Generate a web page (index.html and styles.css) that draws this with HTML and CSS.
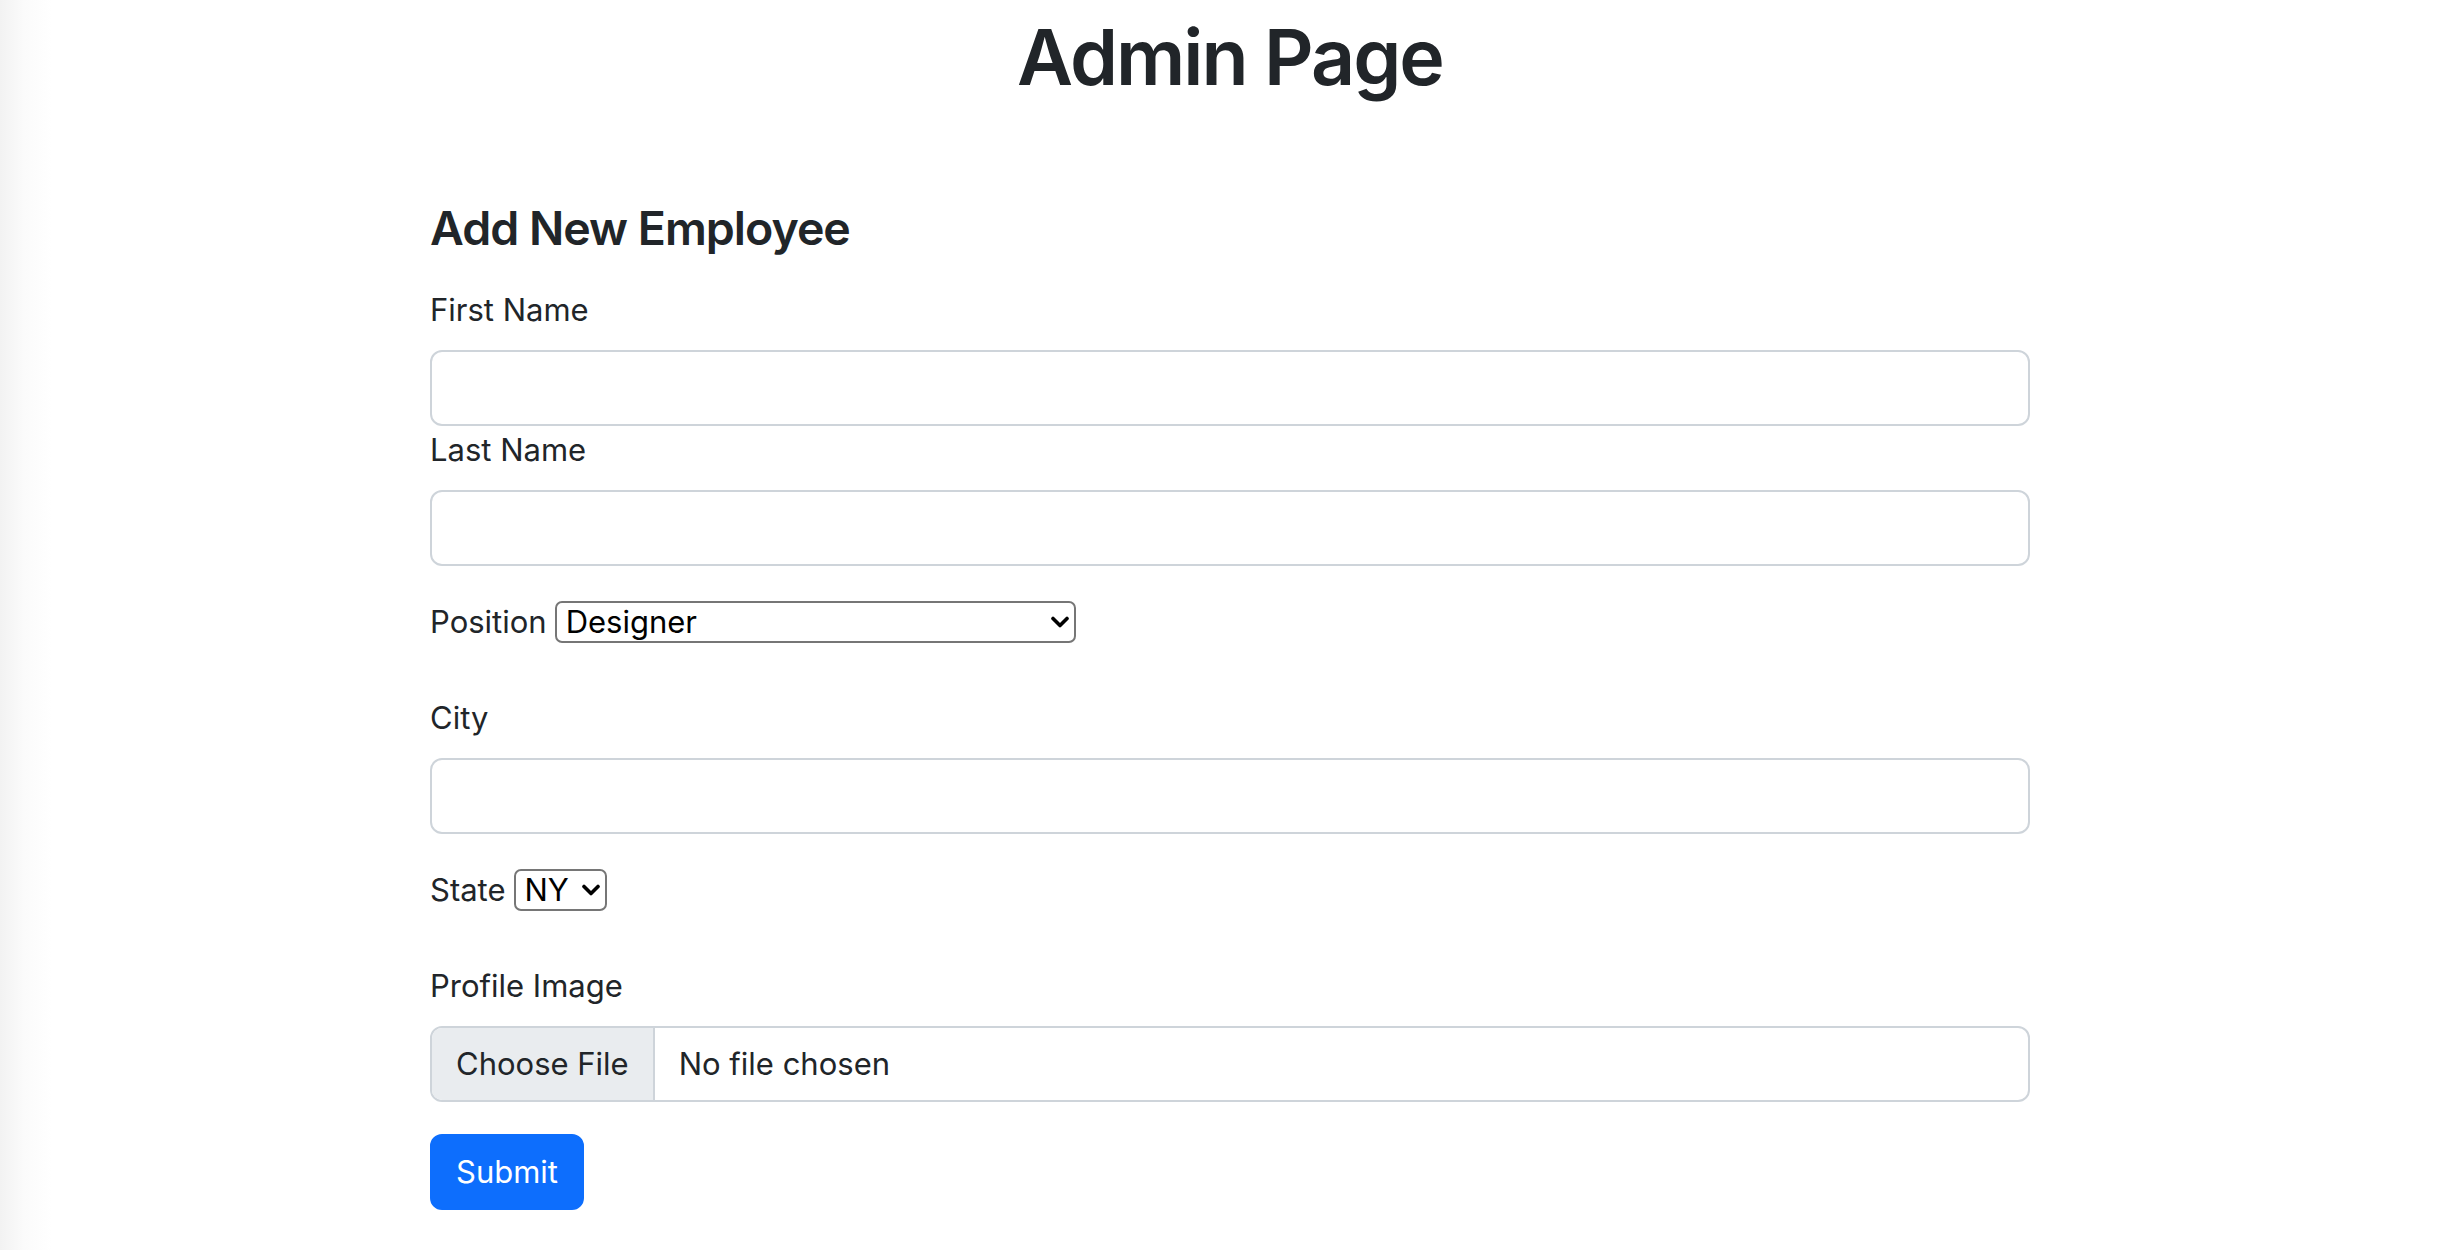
FILE: index.html
```html
<!DOCTYPE html>
<html lang="en">
<head>
<meta charset="utf-8">
<title>Admin Page</title>
<link rel="stylesheet" href="styles.css">
</head>
<body>
  <h1 class="page-title">Admin Page</h1>
  <main class="container">
    <form class="employee-form">
      <h4 class="form-title">Add New Employee</h4>

      <label class="form-label" for="firstName">First Name</label>
      <input class="form-control" type="text" id="firstName">

      <label class="form-label" for="lastName">Last Name</label>
      <input class="form-control group-end" type="text" id="lastName">

      <div class="inline-row">
        <label for="position">Position</label>
        <span class="select-wrap">
          <select id="position" class="native-select select-position">
            <option>Designer</option>
            <option>Developer</option>
            <option>Project Manager</option>
          </select>
          <svg class="chevron" viewBox="0 0 18 12" aria-hidden="true"><polyline points="2,2.5 9,9.5 16,2.5"/></svg>
        </span>
      </div>

      <label class="form-label" for="city">City</label>
      <input class="form-control group-end" type="text" id="city">

      <div class="inline-row">
        <label for="state">State</label>
        <span class="select-wrap">
          <select id="state" class="native-select select-state">
            <option>NY</option>
            <option>CA</option>
            <option>TX</option>
          </select>
          <svg class="chevron" viewBox="0 0 18 12" aria-hidden="true"><polyline points="2,2.5 9,9.5 16,2.5"/></svg>
        </span>
      </div>

      <label class="form-label" for="profileImage">Profile Image</label>
      <label class="file-input group-end" for="profileImage">
        <input type="file" id="profileImage" class="file-hidden">
        <span class="file-btn">Choose File</span>
        <span class="file-name">No file chosen</span>
      </label>

      <button type="submit" class="btn-primary">Submit</button>
    </form>
  </main>
</body>
</html>
```

FILE: styles.css
```css
* { box-sizing: border-box; }

html, body {
  margin: 0;
  padding: 0;
}

body {
  min-height: 1250px;
  background: linear-gradient(to right, #f2f2f2 0, #fbfbfb 24px, #ffffff 52px);
  font-family: Inter, "Noto Sans", "Liberation Sans", sans-serif;
  font-size: 31px;
  line-height: 48px;
  color: #212529;
}

.page-title {
  margin: 0;
  padding-top: 9px;
  font-size: 77px;
  font-weight: 600;
  letter-spacing: -2px;
  line-height: 96px;
  text-align: center;
}

.container {
  width: 1600px;
  margin: 0 auto;
  padding-top: 95px;
}

.employee-form {
  display: flex;
  flex-direction: column;
  align-items: flex-start;
}

.form-title {
  margin: 0 0 28px;
  font-size: 46.5px;
  font-weight: 600;
  letter-spacing: -1px;
  line-height: 57.6px;
}

.form-label {
  display: block;
  margin-bottom: 16px;
}

.form-control {
  display: block;
  width: 100%;
  height: 76px;
  padding: 12px 24px;
  font: inherit;
  color: #212529;
  background: #fff;
  border: 2px solid #ced4da;
  border-radius: 12px;
  outline: none;
}

.group-end {
  margin-bottom: 32px;
}

.inline-row {
  display: flex;
  align-items: center;
  gap: 8px;
  height: 48px;
  margin-bottom: 48px;
}

.select-wrap {
  position: relative;
  display: inline-block;
}

.native-select {
  appearance: none;
  -webkit-appearance: none;
  display: block;
  height: 42px;
  padding: 0 30px 0 9px;
  font-family: inherit;
  font-size: 31px;
  line-height: 38px;
  color: #000;
  background: #fff;
  border: 2px solid #767676;
  border-radius: 7px;
  outline: none;
}

.select-position { width: 521px; }
.select-state { width: 93px; }

.chevron {
  position: absolute;
  top: 15px;
  right: 7px;
  width: 18px;
  height: 12px;
  fill: none;
  stroke: #000;
  stroke-width: 3.6;
  stroke-linecap: round;
  stroke-linejoin: round;
  pointer-events: none;
}

.file-input {
  display: flex;
  align-items: stretch;
  width: 100%;
  height: 76px;
  border: 2px solid #ced4da;
  border-radius: 12px;
  overflow: hidden;
  background: #fff;
  cursor: pointer;
}

.file-hidden {
  display: none;
}

.file-btn {
  display: flex;
  align-items: center;
  padding: 0 24px;
  background: #e9ecef;
  border-right: 2px solid #ced4da;
  color: #212529;
}

.file-name {
  display: flex;
  align-items: center;
  padding-left: 24px;
  color: #212529;
}

.btn-primary {
  height: 76px;
  padding: 12px 24px;
  font: inherit;
  color: #fff;
  background: #0d6efd;
  border: 2px solid #0d6efd;
  border-radius: 12px;
  cursor: pointer;
}
```
